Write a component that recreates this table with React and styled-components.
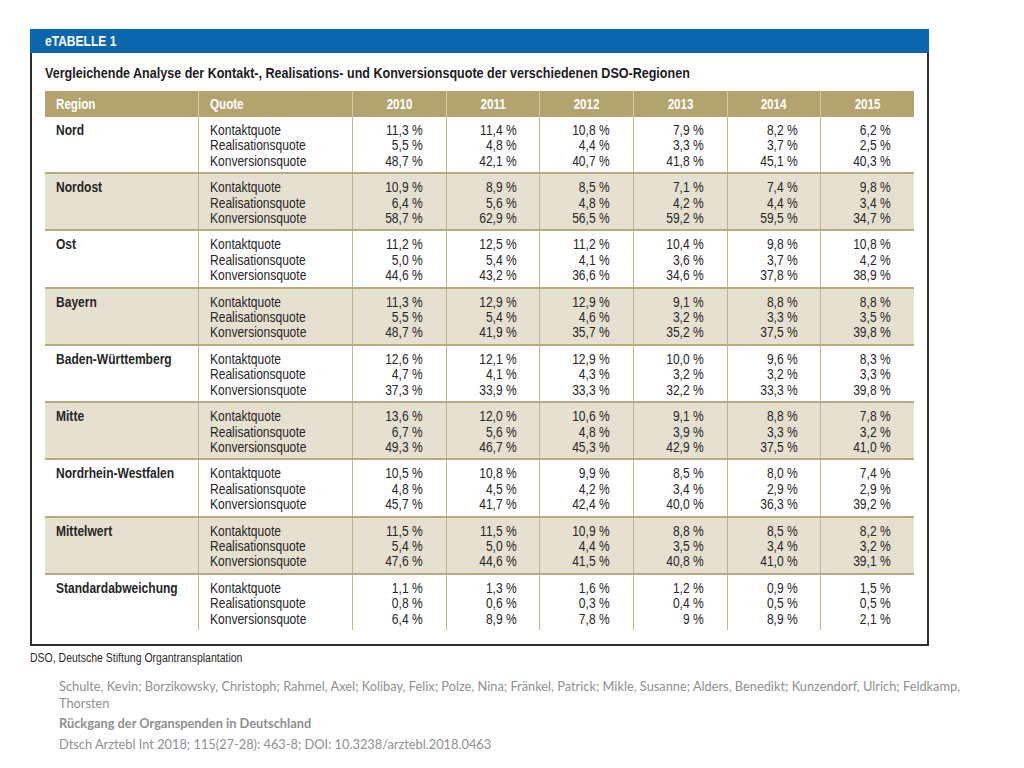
import React from "react";
import styled, { createGlobalStyle, css } from "styled-components";

const GlobalStyle = createGlobalStyle`
  html, body { margin: 0; padding: 0; background: #ffffff; }
  body { font-family: "Liberation Sans", Arial, sans-serif; }
`;

/* Arial-Narrow look: Liberation Sans compressed horizontally */
const narrow = (origin = "left", scale = 0.83) => css`
  transform: scaleX(${scale});
  transform-origin: ${origin} center;
`;

const Page = styled.div`
  width: 1024px;
  height: 768px;
  padding: 29px 0 0 30px;
  box-sizing: border-box;
`;

const Figure = styled.div`
  width: 899px;
  display: flex;
  flex-direction: column;
`;

const Banner = styled.div`
  height: 24px;
  background: #0b66ad;
  padding-left: 15px;
  display: flex;
  align-items: center;
`;

const BannerText = styled.span`
  display: inline-block;
  color: #ffffff;
  font-weight: 700;
  font-size: 14px;
  line-height: 16px;
  ${narrow("left", 0.86)}
`;

const Body = styled.div`
  border: 2px solid #2e2e2e;
  border-top: none;
  padding: 12px 13px 14px 13px;
  display: flex;
  flex-direction: column;
  align-items: flex-start;
  gap: 10px;
  font-family: "Liberation Sans", Arial, sans-serif;
`;

const Title = styled.div`
  width: max-content;
  white-space: nowrap;
  font-weight: 700;
  font-size: 15px;
  line-height: 16px;
  color: #1c1c1c;
  ${narrow("left", 0.836)}
`;

const Table = styled.div`
  display: flex;
  flex-direction: column;
  width: 869px;
`;

const GridRow = styled.div`
  display: grid;
  grid-template-columns: 153px 154px repeat(6, 1fr);
`;

const HeadRow = styled(GridRow)`
  height: 26px;
  background: #b3a46f;
  color: #ffffff;
  font-weight: 700;
  font-size: 14px;
`;

const HeadCell = styled.div`
  display: flex;
  align-items: center;
  justify-content: ${(p) => (p.$center ? "center" : "flex-start")};
  padding-left: ${(p) => (p.$center ? "0" : "11px")};
  border-left: ${(p) => (p.$first ? "none" : "1px solid #d3c9a6")};
`;

const HeadText = styled.span`
  display: inline-block;
  white-space: nowrap;
  ${(p) => narrow(p.$center ? "center" : "left", 0.83)}
`;

const GroupRow = styled(GridRow)`
  background: ${(p) => (p.$shaded ? "#e5e0cf" : "#ffffff")};
  border-bottom: ${(p) => (p.$last ? "none" : "2px solid #b9ab7e")};
  color: #262626;
  font-size: 14.5px;
  line-height: 15.4px;
`;

const Cell = styled.div`
  padding: 6px ${(p) => (p.$num ? "23px" : "0")} 3px ${(p) => (p.$num ? "0" : "11px")};
  text-align: ${(p) => (p.$num ? "right" : "left")};
  font-weight: ${(p) => (p.$bold ? 700 : 400)};
  border-left: ${(p) => (p.$first ? "none" : "1.5px solid #c2b58c")};
  display: flex;
  flex-direction: column;
`;

const Line = styled.span`
  display: block;
  white-space: nowrap;
  ${(p) => narrow(p.$right ? "right" : "left", 0.83)}
`;

const Source = styled.div`
  margin-top: 5px;
  font-size: 12.5px;
  line-height: 15px;
  color: #2a2a2a;
  white-space: nowrap;
  ${narrow("left", 0.84)}
`;

const Citation = styled.div`
  margin-top: 12px;
  margin-left: 29px;
  width: 940px;
  font-family: Lato, "Open Sans", sans-serif;
  font-size: 12.8px;
  color: #8f8f8f;
  display: flex;
  flex-direction: column;
  gap: 3.5px;
`;

const CiteLine = styled.div`
  line-height: 17px;
  font-weight: ${(p) => (p.$bold ? 700 : 400)};
`;

const years = ["2010", "2011", "2012", "2013", "2014", "2015"];
const quotes = ["Kontaktquote", "Realisationsquote", "Konversionsquote"];

const data = [
  ["Nord", [["11,3", "5,5", "48,7"], ["11,4", "4,8", "42,1"], ["10,8", "4,4", "40,7"], ["7,9", "3,3", "41,8"], ["8,2", "3,7", "45,1"], ["6,2", "2,5", "40,3"]]],
  ["Nordost", [["10,9", "6,4", "58,7"], ["8,9", "5,6", "62,9"], ["8,5", "4,8", "56,5"], ["7,1", "4,2", "59,2"], ["7,4", "4,4", "59,5"], ["9,8", "3,4", "34,7"]]],
  ["Ost", [["11,2", "5,0", "44,6"], ["12,5", "5,4", "43,2"], ["11,2", "4,1", "36,6"], ["10,4", "3,6", "34,6"], ["9,8", "3,7", "37,8"], ["10,8", "4,2", "38,9"]]],
  ["Bayern", [["11,3", "5,5", "48,7"], ["12,9", "5,4", "41,9"], ["12,9", "4,6", "35,7"], ["9,1", "3,2", "35,2"], ["8,8", "3,3", "37,5"], ["8,8", "3,5", "39,8"]]],
  ["Baden-Württemberg", [["12,6", "4,7", "37,3"], ["12,1", "4,1", "33,9"], ["12,9", "4,3", "33,3"], ["10,0", "3,2", "32,2"], ["9,6", "3,2", "33,3"], ["8,3", "3,3", "39,8"]]],
  ["Mitte", [["13,6", "6,7", "49,3"], ["12,0", "5,6", "46,7"], ["10,6", "4,8", "45,3"], ["9,1", "3,9", "42,9"], ["8,8", "3,3", "37,5"], ["7,8", "3,2", "41,0"]]],
  ["Nordrhein-Westfalen", [["10,5", "4,8", "45,7"], ["10,8", "4,5", "41,7"], ["9,9", "4,2", "42,4"], ["8,5", "3,4", "40,0"], ["8,0", "2,9", "36,3"], ["7,4", "2,9", "39,2"]]],
  ["Mittelwert", [["11,5", "5,4", "47,6"], ["11,5", "5,0", "44,6"], ["10,9", "4,4", "41,5"], ["8,8", "3,5", "40,8"], ["8,5", "3,4", "41,0"], ["8,2", "3,2", "39,1"]]],
  ["Standardabweichung", [["1,1", "0,8", "6,4"], ["1,3", "0,6", "8,9"], ["1,6", "0,3", "7,8"], ["1,2", "0,4", "9"], ["0,9", "0,5", "8,9"], ["1,5", "0,5", "2,1"]]],
];

export default function App() {
  return (
    <>
      <GlobalStyle />
      <Page>
        <Figure>
          <Banner>
            <BannerText>eTABELLE 1</BannerText>
          </Banner>
          <Body>
            <Title>
              Vergleichende Analyse der Kontakt-, Realisations- und Konversionsquote der verschiedenen DSO-Regionen
            </Title>
            <Table>
              <HeadRow>
                <HeadCell $first>
                  <HeadText>Region</HeadText>
                </HeadCell>
                <HeadCell>
                  <HeadText>Quote</HeadText>
                </HeadCell>
                {years.map((y) => (
                  <HeadCell key={y} $center>
                    <HeadText $center>{y}</HeadText>
                  </HeadCell>
                ))}
              </HeadRow>
              {data.map(([region, vals], i) => (
                <GroupRow key={region} $shaded={i % 2 === 1} $last={i === data.length - 1}>
                  <Cell $first $bold>
                    <Line>{region}</Line>
                  </Cell>
                  <Cell>
                    {quotes.map((q) => (
                      <Line key={q}>{q}</Line>
                    ))}
                  </Cell>
                  {vals.map((col, j) => (
                    <Cell key={j} $num>
                      {col.map((v, k) => (
                        <Line key={k} $right>
                          {v} %
                        </Line>
                      ))}
                    </Cell>
                  ))}
                </GroupRow>
              ))}
            </Table>
          </Body>
        </Figure>
        <Source>DSO, Deutsche Stiftung Organtransplantation</Source>
        <Citation>
          <CiteLine>
            Schulte, Kevin; Borzikowsky, Christoph; Rahmel, Axel; Kolibay, Felix; Polze, Nina; Fränkel, Patrick; Mikle, Susanne; Alders, Benedikt; Kunzendorf, Ulrich; Feldkamp,
            <br />
            Thorsten
          </CiteLine>
          <CiteLine $bold>Rückgang der Organspenden in Deutschland</CiteLine>
          <CiteLine>Dtsch Arztebl Int 2018; 115(27-28): 463-8; DOI: 10.3238/arztebl.2018.0463</CiteLine>
        </Citation>
      </Page>
    </>
  );
}
